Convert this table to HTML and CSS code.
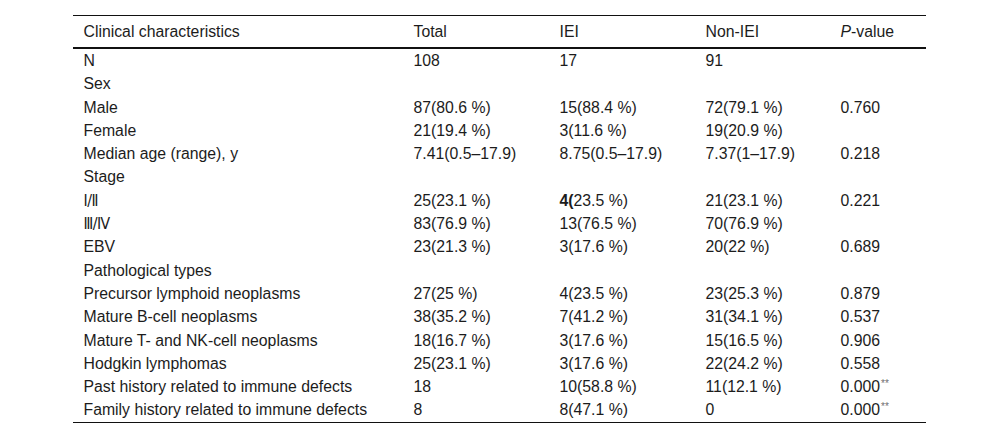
FILE: index.html
```html
<!DOCTYPE html>
<html lang="en">
<head>
<meta charset="utf-8">
<title>Clinical characteristics</title>
<link rel="stylesheet" href="styles.css">
</head>
<body>
<div class="page">
<table class="data">
  <colgroup>
    <col class="c1"><col class="c2"><col class="c3"><col class="c4"><col class="c5">
  </colgroup>
  <thead>
    <tr><th>Clinical characteristics</th><th>Total</th><th>IEI</th><th>Non-IEI</th><th><i>P</i>-value</th></tr>
  </thead>
  <tbody>
    <tr><td>N</td><td>108</td><td>17</td><td>91</td><td></td></tr>
    <tr><td>Sex</td><td></td><td></td><td></td><td></td></tr>
    <tr><td>Male</td><td>87(80.6 %)</td><td>15(88.4 %)</td><td>72(79.1 %)</td><td>0.760</td></tr>
    <tr><td>Female</td><td>21(19.4 %)</td><td>3(11.6 %)</td><td>19(20.9 %)</td><td></td></tr>
    <tr><td>Median age (range), y</td><td>7.41(0.5–17.9)</td><td>8.75(0.5–17.9)</td><td>7.37(1–17.9)</td><td>0.218</td></tr>
    <tr><td>Stage</td><td></td><td></td><td></td><td></td></tr>
    <tr><td><span class="roman">Ⅰ/Ⅱ</span></td><td>25(23.1 %)</td><td><b>4(</b>23.5 %)</td><td>21(23.1 %)</td><td>0.221</td></tr>
    <tr><td><span class="roman">Ⅲ/Ⅳ</span></td><td>83(76.9 %)</td><td>13(76.5 %)</td><td>70(76.9 %)</td><td></td></tr>
    <tr><td>EBV</td><td>23(21.3 %)</td><td>3(17.6 %)</td><td>20(22 %)</td><td>0.689</td></tr>
    <tr><td>Pathological types</td><td></td><td></td><td></td><td></td></tr>
    <tr><td>Precursor lymphoid neoplasms</td><td>27(25 %)</td><td>4(23.5 %)</td><td>23(25.3 %)</td><td>0.879</td></tr>
    <tr><td>Mature B-cell neoplasms</td><td>38(35.2 %)</td><td>7(41.2 %)</td><td>31(34.1 %)</td><td>0.537</td></tr>
    <tr><td>Mature T- and NK-cell neoplasms</td><td>18(16.7 %)</td><td>3(17.6 %)</td><td>15(16.5 %)</td><td>0.906</td></tr>
    <tr><td>Hodgkin lymphomas</td><td>25(23.1 %)</td><td>3(17.6 %)</td><td>22(24.2 %)</td><td>0.558</td></tr>
    <tr><td>Past history related to immune defects</td><td>18</td><td>10(58.8 %)</td><td>11(12.1 %)</td><td>0.000<sup class="sig">**</sup></td></tr>
    <tr><td>Family history related to immune defects</td><td>8</td><td>8(47.1 %)</td><td>0</td><td>0.000<sup class="sig">**</sup></td></tr>
  </tbody>
</table>
</div>
</body>
</html>
```
FILE: styles.css
```css
html, body {
  margin: 0;
  padding: 0;
  background: #ffffff;
}

.page {
  padding: 15px 74px 0 73px;
}

.data {
  width: 853px;
  border-collapse: collapse;
  table-layout: fixed;
  font-family: "Liberation Sans", Arial, sans-serif;
  font-size: 15.8px;
  color: #1c1c1c;
  border-top: 1px solid #111111;
  border-bottom: 1px solid #111111;
}

.c1 { width: 330px; }
.c2 { width: 146px; }
.c3 { width: 146px; }
.c4 { width: 135px; }
.c5 { width: 96px; }

.data th {
  font-weight: normal;
  text-align: left;
  line-height: 31px;
  padding: 0 0 0 10.5px;
  border-bottom: 2px solid #111111;
  white-space: nowrap;
}

.data td {
  line-height: 23.3px;
  padding: 0 0 0 10.5px;
  white-space: nowrap;
}

.roman {
  font-family: "DejaVu Sans Condensed", "Liberation Sans", sans-serif;
  letter-spacing: -0.5px;
}

.sig {
  font-size: 10px;
  color: #6f6f6f;
  vertical-align: 5px;
  line-height: 0;
  margin-left: 1px;
}
```
